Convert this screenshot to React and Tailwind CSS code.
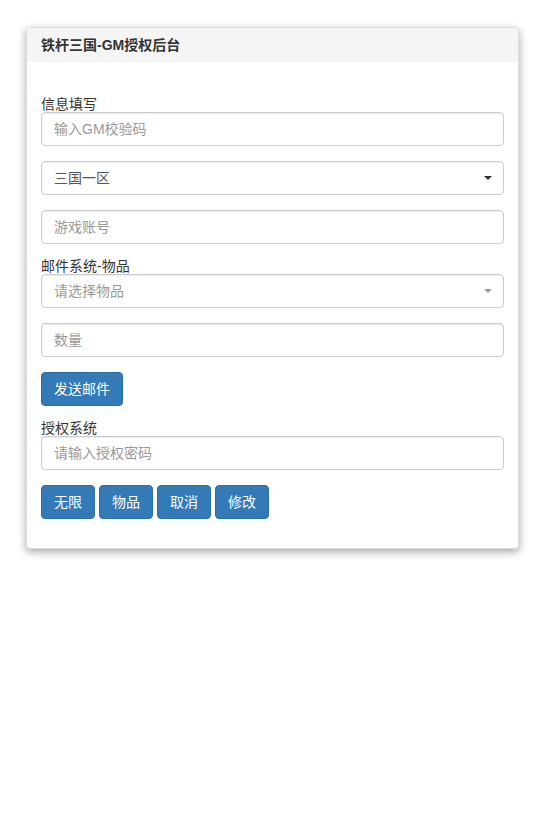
import { useState } from "react";

const font = { fontFamily: '"Liberation Sans", "Noto Sans CJK SC", sans-serif' };

const Caret = ({ light }) => (
  <svg
    className="absolute right-[12px] top-1/2 -translate-y-1/2"
    width="8"
    height="4"
    viewBox="0 0 8 4"
  >
    <path d="M0 0h8L4 4z" fill={light ? "#999" : "#333"} />
  </svg>
);

const inputCls =
  "block w-full h-[34px] px-[12px] text-[14px] leading-[20px] text-[#555] placeholder:text-[#999] bg-white border border-[#ccc] rounded-[4px] shadow-[inset_0_1px_1px_rgba(0,0,0,0.075)] outline-none";

const btnCls =
  "inline-block h-[34px] px-[12px] text-[14px] leading-[20px] text-white bg-[#337ab7] border border-[#2e6da4] rounded-[4px]";

const labelCls = "block text-[14px] leading-[15px] text-[#333]";

export default function App() {
  const [zone, setZone] = useState("三国一区");

  return (
    <div className="min-h-screen bg-white pt-[27px]" style={font}>
      <div className="mx-auto w-[493px] bg-white border border-[#ddd] rounded-[4px] shadow-[0_3px_8px_rgba(0,0,0,0.35)]">
        {/* header */}
        <div className="h-[34px] px-[14px] flex items-center bg-[#f5f5f5] rounded-t-[4px]">
          <h3 className="text-[14px] font-bold text-[#333]">铁杆三国-GM授权后台</h3>
        </div>

        <div className="px-[14px] pt-[35px] pb-[29px] flex flex-col gap-[15px]">
          <div>
            <label className={labelCls}>信息填写</label>
            <input className={inputCls} placeholder="输入GM校验码" />
          </div>

          <div className="relative">
            <select
              value={zone}
              onChange={(e) => setZone(e.target.value)}
              className={inputCls + " appearance-none"}
            >
              <option>三国一区</option>
              <option>三国二区</option>
            </select>
            <Caret />
          </div>

          <input className={inputCls} placeholder="游戏账号" />

          <div>
            <label className={labelCls}>邮件系统-物品</label>
            <div className="relative">
              <div className={inputCls + " flex items-center text-[#999]"}>请选择物品</div>
              <Caret light />
            </div>
          </div>

          <input className={inputCls} placeholder="数量" />

          <div>
            <button className={btnCls}>发送邮件</button>
          </div>

          <div>
            <label className={labelCls}>授权系统</label>
            <input className={inputCls} placeholder="请输入授权密码" />
          </div>

          <div className="flex gap-[4px]">
            <button className={btnCls}>无限</button>
            <button className={btnCls}>物品</button>
            <button className={btnCls}>取消</button>
            <button className={btnCls}>修改</button>
          </div>
        </div>
      </div>
    </div>
  );
}
